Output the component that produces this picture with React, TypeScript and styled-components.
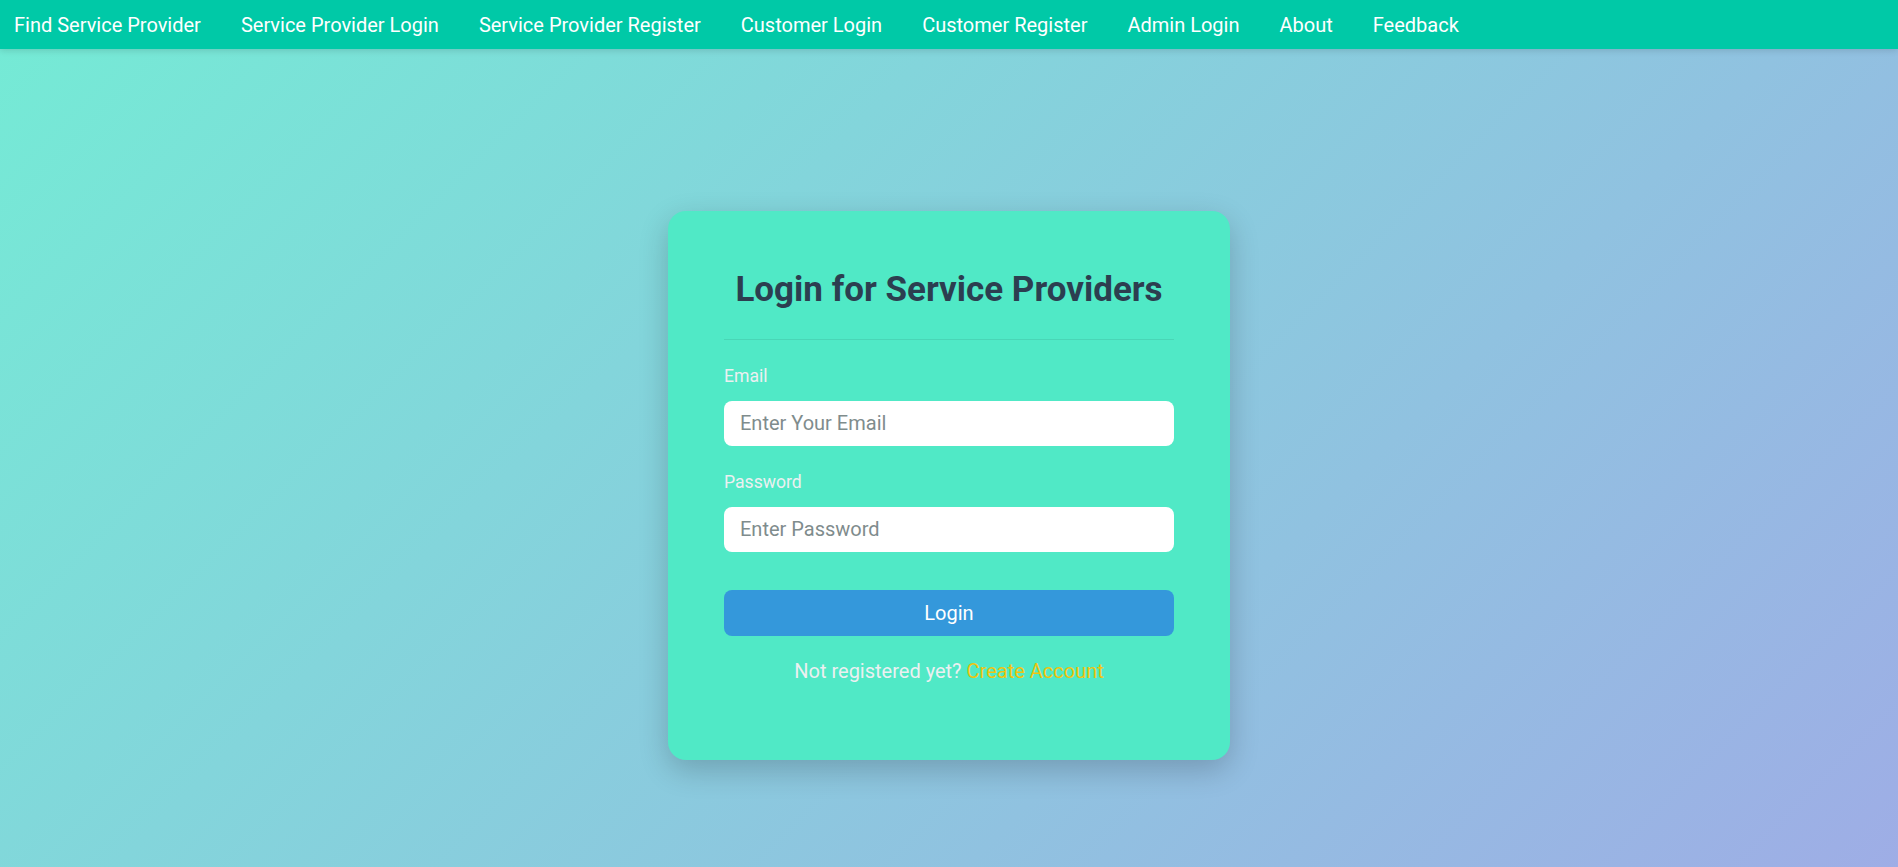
import React from "react";
import styled, { createGlobalStyle } from "styled-components";

const GlobalStyle = createGlobalStyle`
  * { box-sizing: border-box; }
  html, body {
    margin: 0;
    padding: 0;
  }
  body {
    font-family: Roboto, "Liberation Sans", Arial, sans-serif;
    background: linear-gradient(135deg, #74ebd5 0%, #9face6 100%);
    min-height: 100vh;
  }
`;

const navItems = [
  "Find Service Provider",
  "Service Provider Login",
  "Service Provider Register",
  "Customer Login",
  "Customer Register",
  "Admin Login",
  "About",
  "Feedback",
];

const App: React.FC = () => {
  return (
    <>
      <GlobalStyle />
      <Page>
        <NavBar>
          {navItems.map((item) => (
            <NavLink key={item} href="#">
              {item}
            </NavLink>
          ))}
        </NavBar>
        <Main>
          <Card>
            <Title>Login for Service Providers</Title>
            <Divider />
            <Form onSubmit={(e) => e.preventDefault()}>
              <Field $gap={26}>
                <Label>Email</Label>
                <Input type="email" placeholder="Enter Your Email" />
              </Field>
              <Field $gap={28}>
                <Label>Password</Label>
                <Input type="password" placeholder="Enter Password" />
              </Field>
              <SubmitButton type="submit">Login</SubmitButton>
            </Form>
            <FooterText>
              Not registered yet? <FooterLink href="#">Create Account</FooterLink>
            </FooterText>
          </Card>
        </Main>
      </Page>
    </>
  );
};

const Page = styled.div`
  min-height: 100vh;
  display: flex;
  flex-direction: column;
`;

const NavBar = styled.nav`
  display: flex;
  align-items: center;
  gap: 40px;
  height: 49px;
  padding: 0 14px;
  background-color: #00c9a7;
  box-shadow: 0 2px 6px rgba(0, 0, 0, 0.12);
  position: relative;
  z-index: 1;
`;

const NavLink = styled.a`
  color: #ffffff;
  font-size: 20px;
  text-decoration: none;
  white-space: nowrap;
`;

const Main = styled.main`
  min-height: 100vh;
  padding-top: 5px;
  display: flex;
  align-items: center;
  justify-content: center;
`;

const Card = styled.div`
  width: 562px;
  background-color: #50e9c6;
  border-radius: 18px;
  padding: 58px 56px 78px;
  box-shadow: 0 10px 30px rgba(0, 0, 0, 0.2);
`;

const Title = styled.h2`
  margin: 0;
  text-align: center;
  font-size: 35px;
  line-height: 42px;
  font-weight: 700;
  color: #2c3e50;
`;

const Divider = styled.hr`
  border: none;
  height: 1px;
  background-color: rgba(0, 0, 0, 0.08);
  margin: 28px 0 26px;
`;

const Form = styled.form`
  display: flex;
  flex-direction: column;
`;

const Field = styled.div<{ $gap: number }>`
  display: flex;
  flex-direction: column;
  margin-bottom: ${(props) => props.$gap}px;
`;

const Label = styled.label`
  font-size: 17.6px;
  line-height: 20px;
  color: #ecf0f1;
  margin-bottom: 15px;
`;

const Input = styled.input`
  height: 45px;
  border: none;
  border-radius: 8px;
  padding: 0 16px;
  font-family: inherit;
  font-size: 20px;
  color: #2c3e50;
  background: #ffffff;
  outline: none;
  &::placeholder {
    color: #7f8c8d;
  }
`;

const SubmitButton = styled.button`
  height: 46px;
  margin-top: 10px;
  border: none;
  border-radius: 8px;
  background-color: #3498db;
  color: #ffffff;
  font-family: inherit;
  font-size: 20px;
  cursor: pointer;
`;

const FooterText = styled.p`
  margin: 25px 0 0;
  text-align: center;
  font-size: 20px;
  line-height: 21px;
  color: #ecf0f1;
`;

const FooterLink = styled.a`
  color: #f1c40f;
  text-decoration: none;
`;

export default App;
